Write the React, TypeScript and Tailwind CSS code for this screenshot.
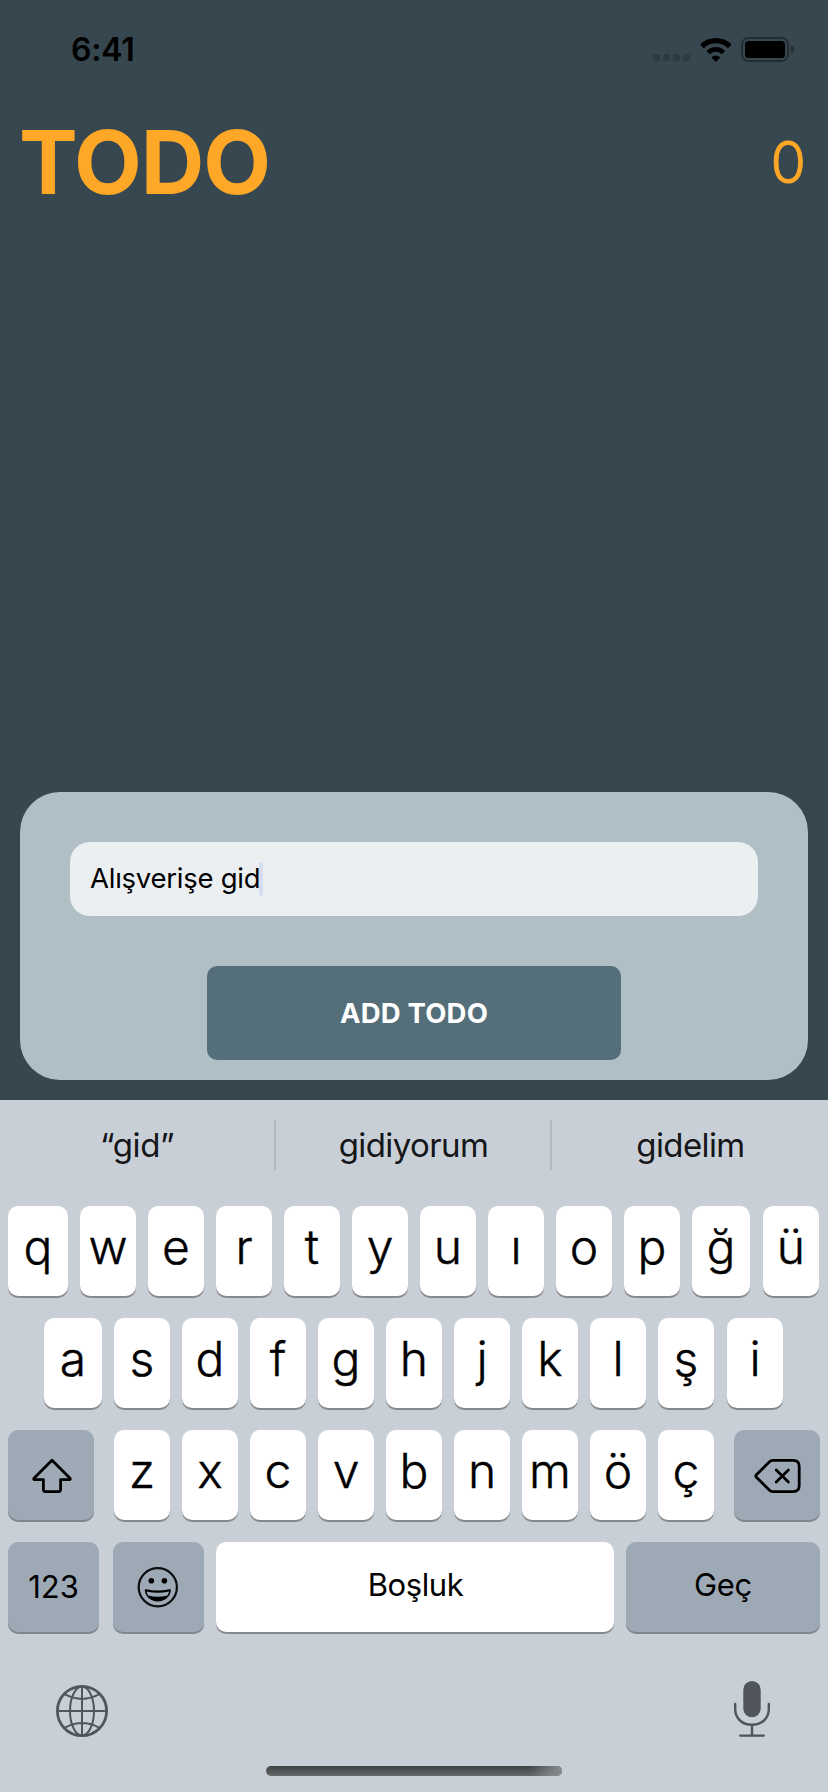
import type { ReactNode } from "react";

type KeyDef = { label: string; size?: string };

const topRow: KeyDef[] = [
  { label: "q", size: "w-[60px]" },
  { label: "w" },
  { label: "e" },
  { label: "r" },
  { label: "t" },
  { label: "y" },
  { label: "u" },
  { label: "ı" },
  { label: "o" },
  { label: "p" },
  { label: "ğ", size: "w-[58px]" },
  { label: "ü", size: "w-14 ml-px" },
];

const homeRow: KeyDef[] = [
  { label: "a", size: "w-[58px]" },
  { label: "s" },
  { label: "d" },
  { label: "f" },
  { label: "g" },
  { label: "h" },
  { label: "j" },
  { label: "k" },
  { label: "l" },
  { label: "ş" },
  { label: "i", size: "w-14 ml-px" },
];

const bottomRow: KeyDef[] = ["z", "x", "c", "v", "b", "n", "m", "ö", "ç"].map((label) => ({ label }));

function LetterKey({ label, size = "w-14" }: KeyDef) {
  return (
    <button
      className={`flex h-[90px] shrink-0 items-center justify-center rounded-[10px] bg-white pb-[9px] text-5xl leading-none font-light shadow-[0_2px_0_#86898d] [-webkit-text-stroke:0.4px_black] ${size}`}
    >
      {label}
    </button>
  );
}

function DarkKey({ size, children }: { size: string; children: ReactNode }) {
  return (
    <button
      className={`flex h-[90px] shrink-0 items-center justify-center rounded-[10px] bg-[#9da9b5] shadow-[0_2px_0_#82878d] ${size}`}
    >
      {children}
    </button>
  );
}

function StatusBar() {
  return (
    <div className="flex h-[99px] items-center justify-between pr-[34px] pl-[71px]">
      <span className="text-[32px] leading-none font-semibold tracking-[-0.2px]">6:41</span>
      <div className="flex items-center">
        <div className="mt-4 flex gap-[3px]">
          <i className="size-[7px] rounded-[2px] bg-[#2d3a40]" />
          <i className="size-[7px] rounded-[2px] bg-[#2d3a40]" />
          <i className="size-[7px] rounded-[2px] bg-[#2d3a40]" />
          <i className="size-[7px] rounded-[2px] bg-[#2d3a40]" />
        </div>
        <svg className="ml-[10px] h-[24px] w-[32px]" viewBox="0 0 32 24" fill="none" stroke="#000">
          <path d="M1.9 8.4A19.7 19.7 0 0 1 29.7 8.4" strokeWidth="5.2" />
          <path d="M8.1 14.6A10.9 10.9 0 0 1 23.5 14.6" strokeWidth="4.8" />
          <path d="M11.3 19.4A6.4 6.4 0 0 1 20.3 19.4L15.8 24Z" fill="#000" stroke="none" />
        </svg>
        <svg className="ml-[9px] h-[25px] w-[53px]" viewBox="0 0 53 25">
          <rect x="1" y="1" width="46" height="23" rx="6.5" fill="none" stroke="#232d32" strokeWidth="2" />
          <rect x="4" y="4" width="40" height="17" rx="3.5" fill="#000" />
          <path d="M50 8.3C54 9.8 54 15 50 16.5Z" fill="#232d32" />
        </svg>
      </div>
    </div>
  );
}

function ShiftIcon() {
  return (
    <svg className="h-[90px] w-[86px]" viewBox="0 0 86 90" fill="none" stroke="#000" strokeWidth="2.8" strokeLinejoin="round">
      <path d="M44 30.2L62 48.2Q62.8 49.6 61.4 49.6H52.6V59.6Q52.6 61.6 50.6 61.6H37.4Q35.4 61.6 35.4 59.6V49.6H26.6Q25.2 49.6 26 48.2Z" />
    </svg>
  );
}

function DeleteIcon() {
  return (
    <svg className="h-[90px] w-[86px]" viewBox="0 0 86 90" fill="none" stroke="#000" strokeWidth="2.8" strokeLinejoin="round" strokeLinecap="round">
      <path d="M39 30.4H59.2Q65.2 30.4 65.2 36.4V55.6Q65.2 61.6 59.2 61.6H39Q36.8 61.6 35.2 60L22.4 47.2Q21.3 46 22.4 44.8L35.2 32Q36.8 30.4 39 30.4Z" />
      <path d="M42.2 40L54.4 52M54.4 40L42.2 52" />
    </svg>
  );
}

function EmojiIcon() {
  return (
    <svg className="h-[90px] w-[91px]" viewBox="0 0 91 90">
      <circle cx="44.8" cy="45.2" r="19.1" fill="none" stroke="#0c0d0e" strokeWidth="2.2" />
      <circle cx="38.3" cy="38.7" r="2.8" />
      <circle cx="51.4" cy="38.7" r="2.8" />
      <path d="M31.8 48.2Q31.8 47 33.2 47.2Q44.8 50 56.4 47.2Q57.9 47 57.9 48.2C57.4 54.6 52 59.4 44.8 59.4S32.3 54.6 31.8 48.2Z" />
      <path d="M33.6 49.4Q44.8 52 56 49.4Q55.6 51.8 54.4 53.4Q44.8 56 35.2 53.4Q34 51.8 33.6 49.4Z" fill="#9da9b5" />
    </svg>
  );
}

function GlobeIcon() {
  return (
    <svg className="size-[52px]" viewBox="0 0 52 52" fill="none" stroke="#50555e" strokeWidth="2">
      <circle cx="26" cy="26" r="24.6" strokeWidth="2.8" />
      <ellipse cx="26" cy="26" rx="12" ry="24.4" />
      <path d="M26 1V51M1 26H51M8.6 9.2Q26 18.6 43.4 9.2M8.6 42.8Q26 33.4 43.4 42.8" />
    </svg>
  );
}

function MicIcon() {
  return (
    <svg className="h-[56px] w-[36px]" viewBox="0 0 36 56" fill="none" stroke="#50555e" strokeWidth="2.4" strokeLinecap="round">
      <rect x="9.3" y="0" width="17.4" height="36.3" rx="8.7" fill="#50555e" stroke="none" />
      <path d="M1.2 23V28C1.2 37.6 8.4 43.8 18 43.8S34.8 37.6 34.8 28V23M18 44V54.5M6.2 54.6H29.8" />
    </svg>
  );
}

export default function App() {
  return (
    <div className="flex h-[1792px] w-[828px] flex-col overflow-hidden bg-[#37474f] font-['Inter','Liberation_Sans',sans-serif] text-black">
      <StatusBar />

      <header className="flex h-[126px] items-center justify-between pr-[22px] pl-[19px] text-[#ffa726]">
        <h1 className="text-[88px] leading-none font-bold tracking-[-1px]">TODO</h1>
        <span className="pt-[2px] text-[57.5px] leading-none font-light [-webkit-text-stroke:0.9px_#ffa726]">0</span>
      </header>

      <section className="mx-5 mt-auto mb-5 flex h-72 shrink-0 flex-col items-center rounded-[40px] bg-[#b0bec5] pt-[50px]">
        <div className="flex h-[74px] w-[688px] items-center rounded-[20px] bg-[#eceff1] pl-5">
          <span className="pb-px text-[27.5px] leading-none tracking-[-0.25px]">Alışverişe gid</span>
          <i className="-ml-px h-[34px] w-1 rounded-[2px] bg-[#d5ddf2]" />
        </div>
        <button className="mt-[50px] h-[94px] w-[414px] rounded-[10px] bg-[#546e7a] pt-[2px] text-[27.5px] leading-none font-bold tracking-[0.2px] text-white">
          ADD TODO
        </button>
      </section>

      <div className="flex h-[692px] shrink-0 flex-col bg-[#c9cfd7]">
        <div className="flex h-[106px] items-center pb-4 text-[33px] leading-none tracking-[-0.6px] text-[#151617]">
          <span className="w-[274px] text-center tracking-[-0.4px]">“gid”</span>
          <i className="h-[50px] w-[2px] bg-[#b4b8c1]" />
          <span className="w-[274px] pl-px text-center">gidiyorum</span>
          <i className="h-[50px] w-[2px] bg-[#b4b8c1]" />
          <span className="w-[276px] pl-px text-center">gidelim</span>
        </div>

        <div className="flex flex-col gap-[22px]">
          <div className="flex gap-3 pl-2">
            {topRow.map((k) => (
              <LetterKey key={k.label} {...k} />
            ))}
          </div>
          <div className="flex gap-3 pl-11">
            {homeRow.map((k) => (
              <LetterKey key={k.label} {...k} />
            ))}
          </div>
          <div className="flex gap-5 pl-2">
            <DarkKey size="w-[86px]">
              <ShiftIcon />
            </DarkKey>
            <div className="flex gap-3">
              {bottomRow.map((k) => (
                <LetterKey key={k.label} {...k} />
              ))}
            </div>
            <DarkKey size="w-[86px]">
              <DeleteIcon />
            </DarkKey>
          </div>
          <div className="flex pl-2 text-[31px] leading-none tracking-[-0.3px]">
            <DarkKey size="w-[91px] mr-[14px] pb-[2px] tracking-[-0.1px]">123</DarkKey>
            <DarkKey size="w-[91px] mr-3">
              <EmojiIcon />
            </DarkKey>
            <button className="mr-3 h-[90px] w-[398px] rounded-[10px] bg-white pb-[6px] pl-px tracking-[-0.4px] shadow-[0_2px_0_#86898d]">
              Boşluk
            </button>
            <DarkKey size="w-[194px] pb-[6px]">Geç</DarkKey>
          </div>
        </div>

        <div className="mt-[49px] flex items-start justify-between pr-[58px] pl-14">
          <div className="pt-1">
            <GlobeIcon />
          </div>
          <MicIcon />
        </div>
        <div className="mx-auto mt-[29px] h-[10px] w-[296px] overflow-hidden rounded-full bg-linear-to-b from-[#414445] to-[#66696c]">
          <div className="ml-auto h-full w-8 bg-linear-to-r from-transparent to-[#8b8e93]" />
        </div>
      </div>
    </div>
  );
}
